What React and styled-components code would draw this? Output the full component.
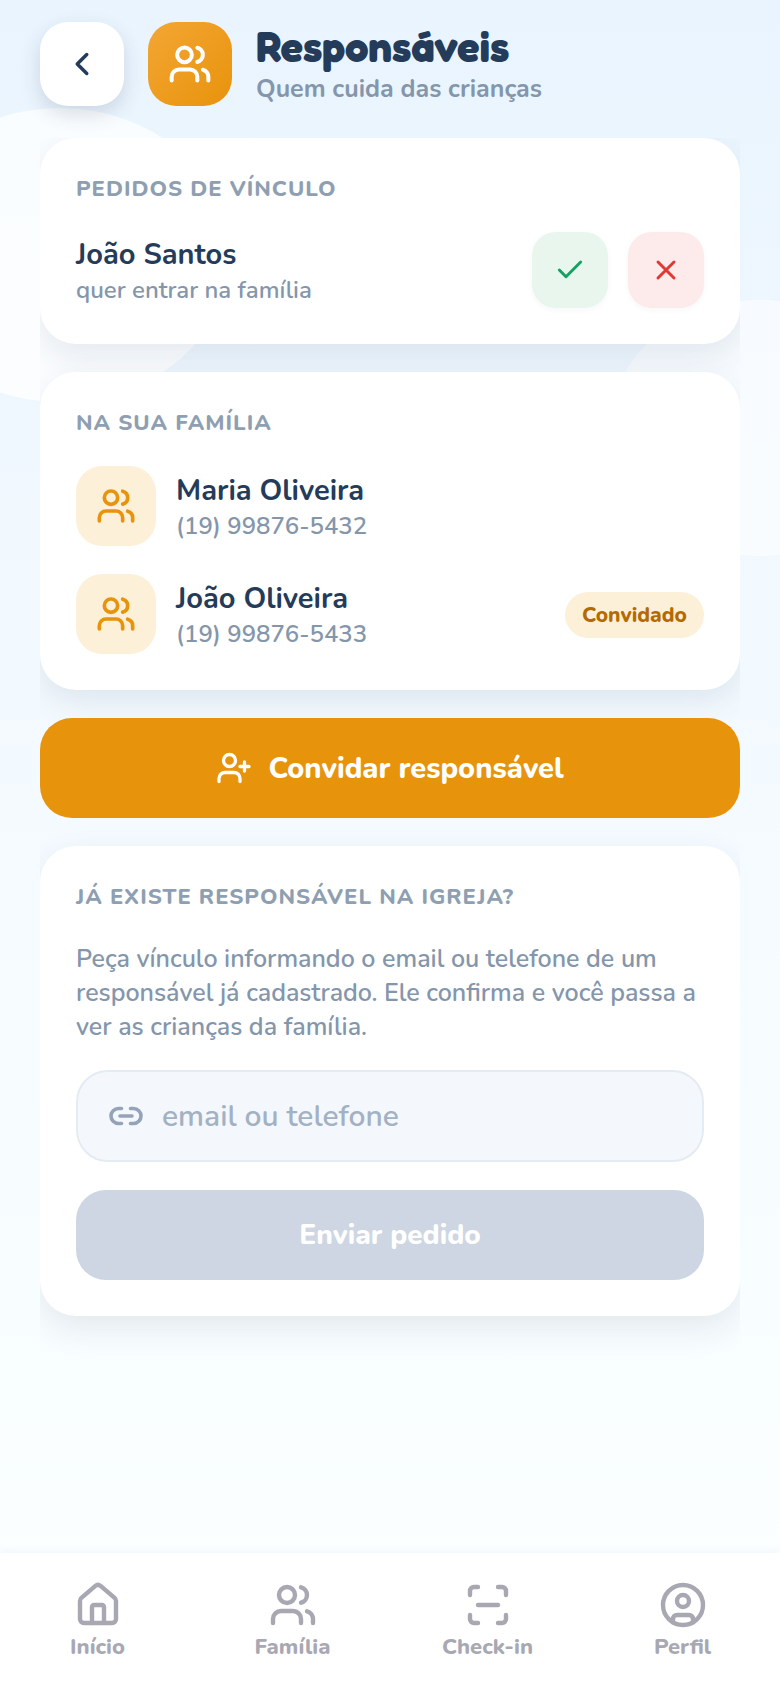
import React from "react";
import styled, { createGlobalStyle } from "styled-components";
import { ChevronLeft, Users, Check, X, UserPlus, Link2, House, ScanLine, CircleUser } from "lucide-react";

const GlobalStyle = createGlobalStyle`
  * {
    box-sizing: border-box;
  }
  body {
    margin: 0;
    font-family: "Nunito", "Noto Sans", sans-serif;
    background: #f7fbff;
  }
`;

export default function App() {
  return (
    <Page>
      <GlobalStyle />
      <BlobLeft />
      <BlobRight />
      <Header>
        <BackButton>
          <ChevronLeft size={38} strokeWidth={2.2} color="#243b5a" />
        </BackButton>
        <HeaderIcon>
          <Users size={44} strokeWidth={2.2} color="#fff" />
        </HeaderIcon>
        <HeaderText>
          <Title>Responsáveis</Title>
          <Subtitle>Quem cuida das crianças</Subtitle>
        </HeaderText>
      </Header>

      <Content>
        <Card>
          <SectionLabel>PEDIDOS DE VÍNCULO</SectionLabel>
          <RequestRow>
            <RowText>
              <Name>João Santos</Name>
              <Detail>quer entrar na família</Detail>
            </RowText>
            <Actions>
              <ActionButton $bg="#e8f6ee">
                <Check size={32} strokeWidth={2.2} color="#16a063" />
              </ActionButton>
              <ActionButton $bg="#fdeaea">
                <X size={32} strokeWidth={2.2} color="#dc3a32" />
              </ActionButton>
            </Actions>
          </RequestRow>
        </Card>

        <Card>
          <SectionLabel>NA SUA FAMÍLIA</SectionLabel>
          <MemberList>
            <Member>
              <Avatar>
                <Users size={40} strokeWidth={2.2} color="#e8930c" />
              </Avatar>
              <RowText>
                <Name>Maria Oliveira</Name>
                <Detail>(19) 99876-5432</Detail>
              </RowText>
            </Member>
            <Member>
              <Avatar>
                <Users size={40} strokeWidth={2.2} color="#e8930c" />
              </Avatar>
              <RowText>
                <Name>João Oliveira</Name>
                <Detail>(19) 99876-5433</Detail>
              </RowText>
              <Badge>Convidado</Badge>
            </Member>
          </MemberList>
        </Card>

        <InviteButton>
          <UserPlus size={36} strokeWidth={2.2} color="#fff" />
          Convidar responsável
        </InviteButton>

        <Card>
          <SectionLabel>JÁ EXISTE RESPONSÁVEL NA IGREJA?</SectionLabel>
          <Help>
            Peça vínculo informando o email ou telefone de um responsável já cadastrado. Ele
            confirma e você passa a ver as crianças da família.
          </Help>
          <InputBox>
            <Link2 size={36} strokeWidth={2.4} color="#94a3b8" />
            <Input placeholder="email ou telefone" />
          </InputBox>
          <SendButton>Enviar pedido</SendButton>
        </Card>
      </Content>

      <BottomNav>
        <NavItem>
          <House size={48} strokeWidth={2.2} color="#a8a8b3" />
          Início
        </NavItem>
        <NavItem>
          <Users size={48} strokeWidth={2.2} color="#a8a8b3" />
          Família
        </NavItem>
        <NavItem>
          <ScanLine size={48} strokeWidth={2.2} color="#a8a8b3" />
          Check-in
        </NavItem>
        <NavItem>
          <CircleUser size={48} strokeWidth={2.2} color="#a8a8b3" />
          Perfil
        </NavItem>
      </BottomNav>
    </Page>
  );
}

const Page = styled.div`
  position: relative;
  width: 780px;
  height: 1688px;
  overflow: hidden;
  display: flex;
  flex-direction: column;
  background: linear-gradient(180deg, #e9f4fe 0%, #f3faff 40%, #fbffff 100%);
`;

const BlobLeft = styled.div`
  position: absolute;
  left: -110px;
  top: 108px;
  width: 340px;
  height: 294px;
  border-radius: 50%;
  background: rgba(255, 255, 255, 0.75);
`;

const BlobRight = styled.div`
  position: absolute;
  left: 610px;
  top: 300px;
  width: 300px;
  height: 256px;
  border-radius: 50%;
  background: rgba(255, 255, 255, 0.55);
`;

const Header = styled.header`
  position: relative;
  display: flex;
  align-items: center;
  gap: 24px;
  padding: 22px 40px 0;
`;

const BackButton = styled.button`
  width: 84px;
  height: 84px;
  border: none;
  border-radius: 28px;
  background: #fff;
  display: flex;
  align-items: center;
  justify-content: center;
  padding: 0;
  box-shadow: 0 8px 20px rgba(36, 59, 90, 0.16);
`;

const HeaderIcon = styled.div`
  width: 84px;
  height: 84px;
  border-radius: 28px;
  background: linear-gradient(135deg, #f3a633, #e8930c);
  display: flex;
  align-items: center;
  justify-content: center;
`;

const HeaderText = styled.div`
  display: flex;
  flex-direction: column;
`;

const Title = styled.h1`
  margin: 0;
  font-family: "Fredoka", "Baloo 2", "Nunito", sans-serif;
  font-size: 42px;
  line-height: 50px;
  font-weight: 700;
  color: #243b5a;
`;

const Subtitle = styled.p`
  margin: 0;
  font-size: 25px;
  line-height: 34px;
  font-weight: 700;
  color: #8496ab;
`;

const Content = styled.main`
  position: relative;
  flex: 1;
  min-height: 0;
  overflow: hidden;
  display: flex;
  flex-direction: column;
  gap: 28px;
  margin: 32px 40px 0;
`;

const Card = styled.section`
  flex-shrink: 0;
  background: #fff;
  border-radius: 36px;
  padding: 36px;
  box-shadow: 0 12px 32px rgba(36, 59, 90, 0.1);
`;

const SectionLabel = styled.h2`
  margin: 0;
  font-size: 22px;
  line-height: 30px;
  font-weight: 800;
  letter-spacing: 1px;
  color: #8f9fb2;
`;

const RequestRow = styled.div`
  display: flex;
  align-items: center;
  justify-content: space-between;
  margin-top: 28px;
`;

const RowText = styled.div`
  display: flex;
  flex-direction: column;
  flex: 1;
  padding-top: 2px;
`;

const Name = styled.div`
  font-size: 29px;
  line-height: 38px;
  font-weight: 700;
  color: #243b5a;
`;

const Detail = styled.div`
  font-size: 24px;
  line-height: 32px;
  font-weight: 600;
  color: #8496ab;
`;

const Actions = styled.div`
  display: flex;
  gap: 20px;
`;

const ActionButton = styled.button`
  width: 76px;
  height: 76px;
  border: none;
  border-radius: 24px;
  padding: 0;
  background: ${(props) => props.$bg};
  display: flex;
  align-items: center;
  justify-content: center;
  box-shadow: 0 2px 6px rgba(36, 59, 90, 0.04);
`;

const MemberList = styled.div`
  display: flex;
  flex-direction: column;
  gap: 28px;
  margin-top: 28px;
`;

const Member = styled.div`
  display: flex;
  align-items: center;
  gap: 20px;
`;

const Avatar = styled.div`
  width: 80px;
  height: 80px;
  border-radius: 26px;
  background: #fdf0d9;
  display: flex;
  align-items: center;
  justify-content: center;
`;

const Badge = styled.span`
  margin-top: 2px;
  padding: 9px 17px;
  border-radius: 24px;
  background: #fdf0d9;
  color: #b36b00;
  font-size: 21px;
  line-height: 28px;
  font-weight: 800;
`;

const InviteButton = styled.button`
  flex-shrink: 0;
  height: 100px;
  border: none;
  border-radius: 32px;
  background: #e8930c;
  color: #fff;
  font-family: inherit;
  font-size: 29px;
  font-weight: 800;
  display: flex;
  align-items: center;
  justify-content: center;
  gap: 16px;
`;

const Help = styled.p`
  margin: 30px 0 0;
  font-size: 25px;
  line-height: 34px;
  font-weight: 600;
  color: #8496ab;
`;

const InputBox = styled.div`
  display: flex;
  align-items: center;
  gap: 16px;
  height: 92px;
  margin-top: 26px;
  padding: 0 30px;
  border-radius: 32px;
  border: 2px solid #e4ebf3;
  background: #f4f8fc;
`;

const Input = styled.input`
  flex: 1;
  min-width: 0;
  border: none;
  outline: none;
  background: transparent;
  font-family: inherit;
  font-size: 30px;
  font-weight: 600;

  &::placeholder {
    color: #a3b1c4;
    opacity: 1;
  }
`;

const SendButton = styled.button`
  width: 100%;
  height: 90px;
  margin-top: 28px;
  border: none;
  border-radius: 30px;
  background: #cdd6e2;
  color: #fff;
  font-family: inherit;
  font-size: 28px;
  font-weight: 800;
`;

const BottomNav = styled.nav`
  position: relative;
  flex-shrink: 0;
  height: 135px;
  background: #fff;
  display: grid;
  grid-template-columns: repeat(4, 1fr);
  padding-top: 28px;
  box-shadow: 0 -2px 8px rgba(36, 59, 90, 0.04);
`;

const NavItem = styled.a`
  display: flex;
  flex-direction: column;
  align-items: center;
  gap: 4px;
  color: #a8a8b3;
  font-size: 22px;
  line-height: 28px;
  font-weight: 800;
`;
